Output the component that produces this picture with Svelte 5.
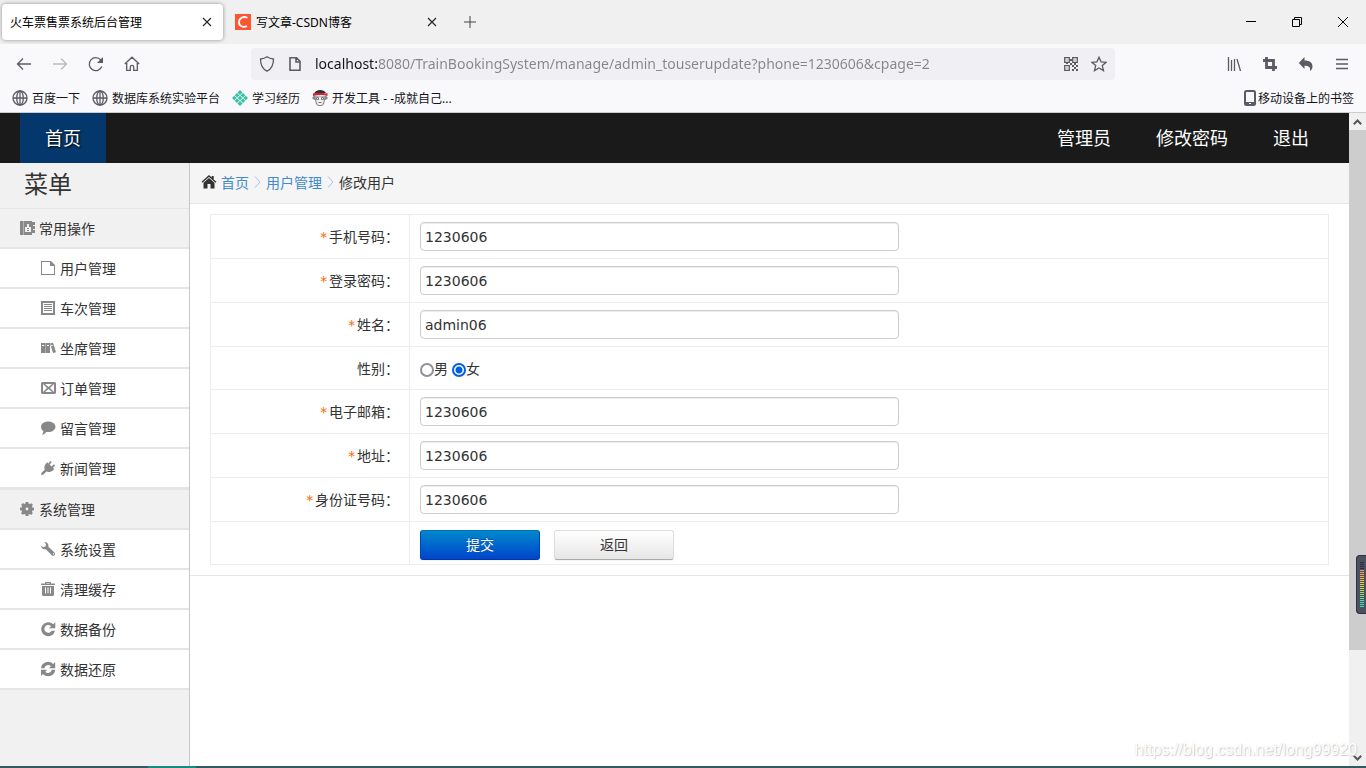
<script>
  const bookmarks = [
    { icon: 'globe', title: '百度一下' },
    { icon: 'globe', title: '数据库系统实验平台' },
    { icon: 'weave', title: '学习经历' },
    { icon: 'monkey', title: '开发工具 - -成就自己...' }
  ];

  const menu = [
    {
      icon: 'book',
      title: '常用操作',
      items: [
        { icon: 'file', title: '用户管理' },
        { icon: 'list', title: '车次管理' },
        { icon: 'books', title: '坐席管理' },
        { icon: 'mail', title: '订单管理' },
        { icon: 'comment', title: '留言管理' },
        { icon: 'plug', title: '新闻管理' }
      ]
    },
    {
      icon: 'gear',
      title: '系统管理',
      items: [
        { icon: 'wrench', title: '系统设置' },
        { icon: 'trash', title: '清理缓存' },
        { icon: 'repeat', title: '数据备份' },
        { icon: 'refresh', title: '数据还原' }
      ]
    }
  ];

  // fill paths, drawn in a 14x14 box
  const glyphs = {
    book: 'M0 0h3v14H0zM3.400 0H12v1h3v3h-2v1h2v3h-2v1h2v3h-3v2H3.400zM7 3v3H5v5h6V6H9V3zM7 7h2v1H7zM7 9h2v1H7z',
    file: 'M0 0h10l4 4v10H0zM1 1v12h12V5H9V1z',
    list: 'M0 0h14v14H0zM2 2v10h10V2zM3 3h8v1H3zM3 5h8v1H3zM3 7h8v1H3zM3 9h8v1H3z',
    books: 'M0 2h4.300v10H0zM1 4v1h2V4zM4.600 2H9v10H4.600zM6 4v1h2V4zM9 2.400l3-.7L15 11.200l-3 .8zM10 4.200l.3 1 1.500-.4-.3-1z',
    mail: 'M1 1h13l1 1v10l-1 1H1l-1-1V2zM2 3v8h11V3zM2 3h2l3.500 3L11 3h2L9 7l4 4h-2L7.500 8 4 11H2l4-4z',
    comment: 'M7.200 .5c4.200 0 7.300 2.300 7.300 5.300s-3.100 5.300-7.300 5.300c-.7 0-1.300 0-2-.2C4.200 12.500 2.700 13.500 1 13.500c.8-.8 1.300-1.900 1.300-3.400C.8 9.100 0 7.600 0 5.800 0 2.800 3 .5 7.200 .5z',
    plug: 'M9.500 0l1.300 1.200-2.200 2.300 2 2L13 3.300l1.200 1.200L12 6.800l1.200 1.200-.9.900C10.400 11 7.300 11.500 5.400 10.500L2.500 13.400l-2.300.8L.5 11.800 3.800 8.700C2.800 6.800 3.300 4.200 5.300 2.200l.9-.9 1.100 1.100z',
    gear: 'M5.700 0h2.600l.4 1.700 1.100.4 1.500-.9 1.600 1.600-.9 1.500.4 1.100L14 5.700v2.600l-1.700.4-.4 1.100.9 1.500-1.600 1.600-1.500-.9-1.100.4L8.300 14H5.700l-.4-1.700-1.100-.4-1.500.9-1.600-1.600.9-1.500-.4-1.100L0 8.300V5.700l1.700-.4.4-1.100-.9-1.500 1.600-1.600 1.500.9 1.100-.4zM7 5.600a1.400 1.400 0 1 0 0 2.800a1.400 1.400 0 0 0 0-2.800z',
    wrench: 'M3.300.2C5.800-.3 8 2 7.300 4.700l6.200 5.900a1.900 1.900 0 0 1-2.700 2.700L4.900 7.200C2.500 7.900.1 6 0 3.400l2.200 1.800L4.500 4.600 5 2.300zM12 11.300v1.100h1v-1.100z',
    trash: 'M4 0h6v1.500h4V3H0V1.500h4zM5 1v.5h4V1zM1 4h12v9l-1 1H2l-1-1zM4 5.500v6h1v-6zM6.500 5.500v6h1v-6zM9 5.500v6h1v-6z',
    repeat: 'M14.300 .3v6H8l2.100-2.100a3.900 3.900 0 1 0 .6 4.500h3.300A7 7 0 1 1 12.200 2.300z',
    refresh: 'M0 6.200A7 7 0 0 1 12.200 2.100l2-2V6.200H8l2-2A3.900 3.900 0 0 0 3.400 6.200zM14.200 7.800a7 7 0 0 1-12.200 4.100l-2 2V7.800h6.200l-2 2a3.900 3.900 0 0 0 6.600-2z',
    home: 'M7 0l2.700 2.500V1h2v3.400L14.500 6.800l-.9 1L7 2 .4 7.800l-.9-1zM7 3l5.500 4.800V13.500H8.500V9h-3v4.500H1.500V7.800z'
  };

  const before = [
    { id: 'phone', title: '手机号码：', value: '1230606' },
    { id: 'password', title: '登录密码：', value: '1230606' },
    { id: 'name', title: '姓名：', value: 'admin06' }
  ];
  const after = [
    { id: 'email', title: '电子邮箱：', value: '1230606' },
    { id: 'address', title: '地址：', value: '1230606' },
    { id: 'idcard', title: '身份证号码：', value: '1230606' }
  ];

  let sex = $state('女');
</script>

{#snippet glyph(name)}
  <svg class="glyph" viewBox="0 0 14 14" aria-hidden="true"><path fill-rule="evenodd" d={glyphs[name]} /></svg>
{/snippet}

{#snippet close()}
  <svg width="10" height="10" viewBox="0 0 10 10" stroke="#222" stroke-width="1.1"><path d="M1 1l8 8M9 1l-8 8" /></svg>
{/snippet}

{#snippet favicon(name)}
  {#if name === 'globe'}
    <svg width="16" height="16" viewBox="0 0 16 16" fill="none" stroke="#5b5b66" stroke-width="1.300"><circle cx="8" cy="8" r="7" /><ellipse cx="8" cy="8" rx="3.300" ry="7" /><path d="M1 8h14M8 1v14" /></svg>
  {:else if name === 'weave'}
    <svg width="16" height="16" viewBox="0 0 16 16" fill="#35c2a2"><path d="M8 0l2.500 2.500L8 5 5.500 2.500zM5 3l2.300 2.300L5 7.600 2.700 5.300zM11 3l2.300 2.300L11 7.600 8.700 5.300zM2.300 5.700L4.600 8l-2.300 2.300L0 8zM8 5.700L10.300 8 8 10.300 5.700 8zM13.700 5.700L16 8l-2.300 2.300L11.400 8zM5 8.400l2.300 2.300L5 13l-2.300-2.300zM11 8.400l2.300 2.300L11 13l-2.300-2.300zM8 11l2.500 2.500L8 16l-2.500-2.500z" /></svg>
  {:else}
    <svg width="16" height="16" viewBox="0 0 16 16">
      <path fill="#888" d="M2 6h12l1.500 1v2L13 10l-1 4-2 2H6l-2-2-1-4L.5 9V7z" />
      <path fill="#eee" d="M3.500 6.500h9L11.500 12 10 15H6l-1.500-3z" />
      <path fill="#2b3038" d="M2 4C3 1 5.500 0 8 0s5 1 6 3z" />
      <path fill="#d8202f" d="M1 3.500C5 2.500 10 2.500 14 3.500L15.500 3v3L13.500 5.500C10 4.800 5 5 1 6z" />
      <path fill="none" stroke="#777" d="M4.500 7.500h2v2h-2zM9.500 7.500h2v2h-2zM6.500 12.500h3" />
    </svg>
  {/if}
{/snippet}

{#snippet field(row)}
  <tr>
    <th><span class="required">*</span><label for={row.id}>{row.title}</label></th>
    <td><input class="field" type="text" id={row.id} value={row.value} /></td>
  </tr>
{/snippet}

<div class="window">
  <div class="tabs">
    <div class="tab tab--active">
      <span class="tab__title">火车票售票系统后台管理</span>
      <button class="tab__close" aria-label="close">{@render close()}</button>
    </div>
    <div class="tab">
      <svg class="tab__icon" width="16" height="16" viewBox="0 0 16 16"><path fill="#fc5531" d="M0 0h16v16H0z" /><path fill="none" stroke="#fff" stroke-width="1.800" d="M12.500 3.800C8 1.800 4 4 4 8.200c0 4 3.800 5.600 8 4" /></svg>
      <span class="tab__title">写文章-CSDN博客</span>
      <button class="tab__close" aria-label="close">{@render close()}</button>
    </div>
    <button class="tabs__add" aria-label="add">
      <svg width="12" height="12" viewBox="0 0 12 12" stroke="#444"><path d="M6 0v12M0 6h12" /></svg>
    </button>
    <div class="controls">
      <button aria-label="minimize"><svg width="10" height="10" viewBox="0 0 10 10" stroke="#000"><path d="M0 4.500h10" /></svg></button>
      <button aria-label="restore"><svg width="10" height="10" viewBox="0 0 10 10" fill="none" stroke="#000"><path d="M.5 2.500h7v7h-7zM2.500 2.500v-2h7v7h-2" /></svg></button>
      <button aria-label="close"><svg width="10" height="10" viewBox="0 0 10 10" stroke="#000"><path d="M0 0l10 10M10 0L0 10" /></svg></button>
    </div>
  </div>

  <div class="toolbar">
    <button class="tool" aria-label="back"><svg viewBox="0 0 16 16"><path d="M15 8H1.500M7 2.500L1.500 8 7 13.500" /></svg></button>
    <button class="tool tool--off" aria-label="forward"><svg viewBox="0 0 16 16"><path d="M1 8h13.500M9 2.500L14.500 8 9 13.500" /></svg></button>
    <button class="tool" aria-label="reload"><svg viewBox="0 0 16 16"><path d="M13.800 10.500A6.500 6.500 0 1 1 12.800 4" /><path class="solid" d="M15 1v6H9z" /></svg></button>
    <button class="tool" aria-label="home"><svg viewBox="0 0 16 16"><path d="M.8 8L8 1.200 15.200 8M2.700 7v7.300h3.600V11a1.700 1.700 0 0 1 3.400 0v3.300h3.600V7" /></svg></button>
    <div class="address">
      <svg viewBox="0 0 16 16"><path d="M8 .8c2 1.500 4.200 2 6.500 2.200C14.500 8.500 13 12.800 8 15.200 3 12.800 1.500 8.500 1.500 3 3.800 2.800 6 2.300 8 .8z" /></svg>
      <svg viewBox="0 0 16 16"><path stroke-width="1.600" d="M3 1.800h6.500L13 5.300v8.900H3zM9 2v4h4" /></svg>
      <input class="address__input" type="text" aria-label="url" value="localhost:8080/TrainBookingSystem/manage/admin_touserupdate?phone=1230606&cpage=2" />
      <svg viewBox="0 0 16 16"><path d="M1.700 1.700h4.600v4.600H1.700zM9.700 1.700h4.600v4.600H9.700zM1.700 9.700h4.600v4.600H1.700z" /><path class="solid" d="M3.500 3.500h1v1h-1zM11.500 3.500h1v1h-1zM3.500 11.500h1v1h-1zM7 3h2v2H7zM7 7h2v2H7zM3 7h2v1H3zM9 9h2v2H9zM11 7h2v2h-2zM13 9h2v2h-2zM11 11h2v2h-2zM9 13h2v2H9zM13 13h2v2h-2z" /></svg>
      <svg viewBox="0 0 16 16"><path d="M8 1.200l2.100 4.600 5 .5-3.800 3.300 1.200 5L8 12l-4.500 2.600 1.200-5L.9 6.300l5-.5z" /></svg>
    </div>
    <button class="tool" aria-label="library"><svg viewBox="0 0 16 16"><path d="M2.500 1v14M5.500 4v11M8.500 3v12M11 3l3.500 12" /></svg></button>
    <button class="tool" aria-label="screenshot"><svg viewBox="0 0 16 16"><path stroke-width="2.800" d="M4.500 1v10.500H15M1 4.500h10.500V15" /></svg></button>
    <button class="tool" aria-label="undo"><svg viewBox="0 0 16 16"><path class="solid" d="M6.500 1v3.500c5 0 8 2 8 6 0 2-1 3.700-2.500 4.500.8-3.500-1-5.200-5.500-5.200V13L.8 7z" /></svg></button>
    <button class="tool" aria-label="menu"><svg viewBox="0 0 16 16"><path d="M2 3.500h12M2 8h12M2 12.500h12" /></svg></button>
  </div>

  <div class="bookmarks">
    {#each bookmarks as mark}
      <a class="bookmark" href="#bookmark">{@render favicon(mark.icon)}{mark.title}</a>
    {/each}
    <a class="bookmark bookmark--mobile" href="#mobile">
      <svg width="12" height="16" viewBox="0 0 12 16"><rect x="1" y="1" width="10" height="14" rx="1.500" fill="none" stroke="#5b5b66" stroke-width="2" /><path fill="#5b5b66" d="M1 12h10v3H1z" /><path fill="#fff" d="M5 13h2v1H5z" /></svg>移动设备上的书签
    </a>
  </div>

  <div class="viewport">
    <div class="page">
      <header class="header">
        <a class="header__home" href="#home">首页</a>
        <nav class="header__links">
          <a href="#admin">管理员</a>
          <a href="#password">修改密码</a>
          <a href="#logout">退出</a>
        </nav>
      </header>
      <div class="body">
        <aside class="sidebar">
          <h1 class="sidebar__title">菜单</h1>
          {#each menu as group}
            <div class="group">
              <div class="group__title">{@render glyph(group.icon)}{group.title}</div>
              {#each group.items as item}
                <a class="group__item" href="#item">{@render glyph(item.icon)}{item.title}</a>
              {/each}
            </div>
          {/each}
        </aside>
        <main class="main">
          <div class="crumbs">
            {@render glyph('home')}
            <a href="#home">首页</a>
            <svg class="crumbs__arrow" viewBox="0 0 7 12"><path d="M1 .5L6 6l-5 5.500" /></svg>
            <a href="#users">用户管理</a>
            <svg class="crumbs__arrow" viewBox="0 0 7 12"><path d="M1 .5L6 6l-5 5.500" /></svg>
            <span>修改用户</span>
          </div>
          <form class="form" onsubmit={(e) => e.preventDefault()}>
            <table>
              <tbody>
                {#each before as row}{@render field(row)}{/each}
                <tr class="short">
                  <th>性别：</th>
                  <td>
                    <div class="radios">
                      <label><input type="radio" name="sex" value="男" bind:group={sex} />男</label>
                      <label><input type="radio" name="sex" value="女" bind:group={sex} />女</label>
                    </div>
                  </td>
                </tr>
                {#each after as row}{@render field(row)}{/each}
                <tr class="short">
                  <th></th>
                  <td>
                    <div class="actions">
                      <button class="btn btn--primary" type="submit">提交</button>
                      <button class="btn" type="button">返回</button>
                    </div>
                  </td>
                </tr>
              </tbody>
            </table>
          </form>
        </main>
      </div>
      <span class="watermark">https://blog.csdn.net/long99920</span>
    </div>
    <div class="scrollbar">
      <button aria-label="up"><svg width="9" height="6" viewBox="0 0 9 6"><path d="M.8 5.200l3.700-3.700 3.700 3.700" /></svg></button>
      <div class="scrollbar__track"><div class="scrollbar__thumb"></div></div>
      <button aria-label="down"><svg width="9" height="6" viewBox="0 0 9 6"><path d="M.8.8l3.700 3.700L8.200.8" /></svg></button>
    </div>
  </div>
  <div class="taskbar"><div class="taskbar__active"></div></div>
  <div class="meter"><div class="meter__bars"></div></div>
</div>

<style>
  :global(body) {
    background: #fff;
  }

  .window {
    box-sizing: border-box;
    color: #333;
    display: flex;
    flex-direction: column;
    font-family: "DejaVu Sans", "Noto Sans CJK SC", sans-serif;
    font-size: 14px;
    min-height: 100vh;
    position: relative;
  }

  .window :global(*) {
    box-sizing: border-box;
  }

  svg {
    display: block;
    flex: none;
  }

  a {
    color: inherit;
    text-decoration: none;
  }

  button {
    align-items: center;
    background: none;
    border: 0;
    display: flex;
    justify-content: center;
    padding: 0;
  }

  .tabs,
  .toolbar,
  .bookmarks {
    align-items: center;
    color: #15141a;
    display: flex;
    font-family: "Noto Sans", "Noto Sans CJK SC", sans-serif;
    font-size: 12px;
  }

  .tabs {
    background: #f0f0f0;
    gap: 4px;
    height: 44px;
    padding-left: 2px;
  }

  .tab {
    align-items: center;
    border-radius: 4px;
    display: flex;
    flex: 0 1 221px;
    height: 36px;
    padding: 0 8px;
  }

  .tab--active {
    background: #fff;
    box-shadow: 0 0 4px rgba(0, 0, 0, .4);
  }

  .tab__icon {
    margin-right: 5px;
  }

  .tab__title {
    color: #000;
    flex: 1;
    white-space: nowrap;
  }

  .tab__close {
    height: 16px;
    width: 16px;
  }

  .tabs__add {
    height: 32px;
    width: 36px;
  }

  .controls {
    display: flex;
    margin-left: auto;
  }

  .controls button {
    height: 32px;
    width: 46px;
  }

  .toolbar {
    background: #f9f9fb;
    height: 40px;
    padding: 0 6px;
  }

  .tool {
    height: 32px;
    width: 36px;
  }

  .tool--off {
    opacity: .4;
  }

  .tool svg,
  .address svg {
    fill: none;
    height: 16px;
    stroke: #5b5b66;
    stroke-width: 1.3;
    width: 16px;
  }

  .solid {
    fill: #5b5b66;
    stroke: none;
  }

  .address {
    align-items: center;
    background: #f0f0f4;
    border-radius: 4px;
    display: flex;
    flex: 1;
    gap: 12px;
    height: 32px;
    margin: 0 101px;
    padding: 0 8px;
  }

  /* host name dark, rest of the url grey */
  .address__input {
    -webkit-background-clip: text;
    background-clip: text;
    background-image: linear-gradient(90deg, #15141a 62px, #85858d 62px);
    border: 0;
    color: #85858d;
    flex: 1;
    font-family: "Noto Sans", sans-serif;
    font-size: 14px;
    height: 24px;
    min-width: 0;
    outline: none;
    padding: 0 0 2px;
    -webkit-text-fill-color: transparent;
  }

  .bookmarks {
    background: #f9f9fb;
    border-bottom: 1px solid #ccc;
    gap: 12px;
    height: 29px;
    padding: 0 12px;
  }

  .bookmark {
    align-items: center;
    display: flex;
    gap: 4px;
    white-space: nowrap;
  }

  .bookmark--mobile {
    gap: 2px;
    margin-left: auto;
  }

  .viewport {
    display: flex;
    flex: 1;
  }

  .page {
    display: flex;
    flex: 1;
    flex-direction: column;
    position: relative;
  }

  .header {
    background: #1a1a1a;
    color: #fff;
    display: flex;
    font-size: 18px;
    height: 50px;
    justify-content: space-between;
    line-height: 52px;
    padding: 0 40px 0 20px;
  }

  .header__home {
    background: #04386c;
    padding: 0 25px;
    text-shadow: 1px 1px 2px #000;
  }

  .header__links {
    display: flex;
    gap: 45px;
  }

  .body {
    display: flex;
    flex: 1;
  }

  .sidebar {
    background: #f1f1f1;
    border-right: 1px solid #c8c8c8;
    flex: 0 0 190px;
  }

  .sidebar__title {
    border-bottom: 1px solid #e5e5e5;
    font-size: 24px;
    font-weight: 400;
    height: 46px;
    line-height: 44px;
    margin: 0;
    padding-left: 24px;
  }

  .group + .group {
    border-top: 1px solid #e5e5e5;
  }

  .group__title,
  .group__item {
    align-items: center;
    border-bottom: 2px solid #e5e5e5;
    display: flex;
    gap: 5px;
    height: 40px;
    padding-left: 20px;
  }

  .group__item {
    background: #fff;
    padding-left: 41px;
  }

  .glyph {
    fill: #888;
    height: 14px;
    overflow: visible;
    width: 14px;
  }

  .main {
    background: #fff;
    flex: 1;
  }

  .crumbs {
    align-items: center;
    background: #f5f5f5;
    border-bottom: 1px solid #e5e5e5;
    display: flex;
    gap: 5px;
    height: 41px;
    padding: 0 0 2px 12px;
  }

  .crumbs .glyph {
    fill: #333;
  }

  .crumbs a {
    color: #428bca;
  }

  .crumbs__arrow {
    fill: none;
    height: 12px;
    stroke: #a9c0dc;
    width: 7px;
  }

  .form {
    border-bottom: 1px solid #e5e5e5;
    padding: 10px 20px;
  }

  table {
    border-collapse: collapse;
    width: 100%;
  }

  th,
  td {
    border: 1px solid #ededed;
    height: 44px;
    padding: 0 10px;
  }

  .short th,
  .short td {
    height: 43px;
  }

  th {
    font-weight: 400;
    padding-bottom: 2px;
    text-align: right;
    width: 199px;
  }

  .short th {
    padding-bottom: 0;
  }

  .required {
    color: #f60;
    font-family: "DejaVu Sans Mono", monospace;
    font-size: 14px;
    margin-right: 1px;
  }

  .field {
    background: #fff;
    border: 1px solid #ccc;
    border-radius: 4px;
    box-shadow: inset 0 1px 1px rgba(0, 0, 0, .075);
    color: #333;
    display: block;
    font: inherit;
    height: 29px;
    max-width: 479px;
    padding: 0 4px;
    width: 100%;
  }

  .radios {
    display: flex;
    gap: 4px;
  }

  .radios label {
    align-items: center;
    display: flex;
  }

  .radios input {
    appearance: none;
    background: #fff;
    border: 2px solid #8f8f9d;
    border-radius: 50%;
    height: 14px;
    margin: 3px 0 0;
    width: 14px;
  }

  .radios input:checked {
    background: radial-gradient(circle, #0060df 3px, #fff 4px);
    border-color: #0060df;
  }

  .actions {
    display: flex;
    gap: 14px;
    padding-top: 4px;
  }

  .btn {
    background: linear-gradient(#fff, #e6e6e6);
    border: 1px solid #ddd;
    border-bottom-color: #aaa;
    border-radius: 3px;
    box-shadow: 0 1px 2px rgba(0, 0, 0, .05);
    color: #333;
    font-family: inherit;
    font-size: 14px;
    height: 30px;
    padding-bottom: 2px;
    width: 120px;
  }

  .btn--primary {
    background: linear-gradient(#08c, #04c);
    border-color: #0074b8 #04b #0038a8;
    color: #fff;
    text-shadow: 0 -1px 0 rgba(0, 0, 0, .25);
  }

  .watermark {
    bottom: 7px;
    color: #fff;
    font-family: "Liberation Sans", sans-serif;
    font-size: 16px;
    pointer-events: none;
    position: absolute;
    right: -8px;
    text-shadow: 1px 1px 1px #ccc, 0 0 1px #ddd;
    white-space: nowrap;
    z-index: 1;
  }

  .scrollbar {
    background: #f0f0f0;
    display: flex;
    flex: 0 0 17px;
    flex-direction: column;
  }

  .scrollbar button {
    height: 17px;
  }

  .scrollbar path {
    fill: none;
    stroke: #555;
    stroke-width: 2;
  }

  .scrollbar__track {
    display: flex;
    flex: 1;
    flex-direction: column;
  }

  .scrollbar__thumb {
    background: #cdcdcd;
    flex: 0 0 84%;
  }

  .taskbar {
    background: #335a5f;
    height: 2px;
    padding-left: 148px;
  }

  .taskbar__active {
    background: #178a86;
    height: 2px;
    width: 48px;
  }

  .meter {
    background: #4c5160;
    border: 1px solid #2c3040;
    border-radius: 4px 0 0 4px;
    border-right: 0;
    height: 59px;
    padding: 6px 2px 6px 3px;
    position: absolute;
    right: 0;
    top: 555px;
    width: 10px;
    z-index: 2;
  }

  .meter__bars {
    background:
      repeating-linear-gradient(transparent 0 1px, #4c5160 1px 2px),
      linear-gradient(#2c3040 8px, #ff8a50 8px, #f0d040 20px, #a0e060 30px, #40e0b0 40px);
    height: 45px;
  }
</style>
